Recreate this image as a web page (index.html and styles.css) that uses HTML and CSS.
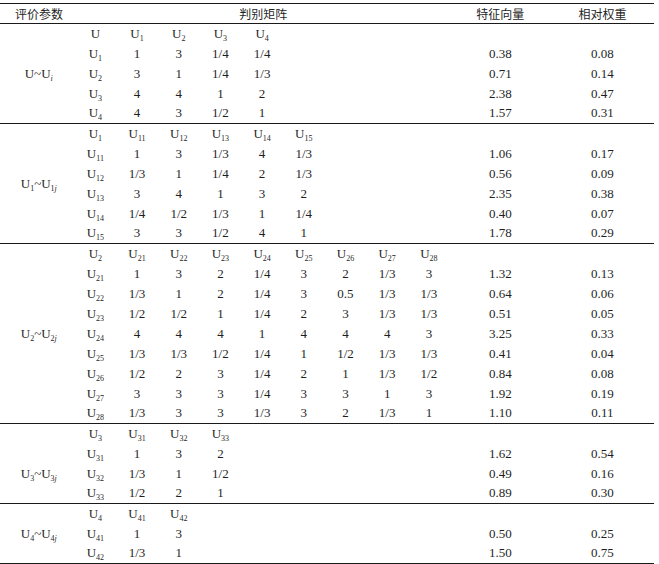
FILE: index.html
```html
<!DOCTYPE html>
<html lang="zh">
<head>
<meta charset="utf-8">
<title>判别矩阵</title>
<link rel="stylesheet" href="styles.css">
</head>
<body>
<table class="tbl">
<colgroup>
<col class="c-label">
<col class="c-m"><col class="c-m"><col class="c-m"><col class="c-m"><col class="c-m"><col class="c-m"><col class="c-m"><col class="c-m"><col class="c-m">
<col class="c-v1"><col class="c-v2">
</colgroup>
<thead>
<tr>
<th class="h-param">评价参数</th>
<th class="h-mat" colspan="9">判别矩阵</th>
<th class="h-val">特征向量</th>
<th class="h-val">相对权重</th>
</tr>
</thead>
<tbody>
<tr><td class="lbl" rowspan="5">U~U<sub class="it">i</sub></td><td>U</td><td>U<sub>1</sub></td><td>U<sub>2</sub></td><td>U<sub>3</sub></td><td>U<sub>4</sub></td><td></td><td></td><td></td><td></td><td></td><td></td></tr>
<tr><td>U<sub>1</sub></td><td>1</td><td>3</td><td>1/4</td><td>1/4</td><td></td><td></td><td></td><td></td><td>0.38</td><td>0.08</td></tr>
<tr><td>U<sub>2</sub></td><td>3</td><td>1</td><td>1/4</td><td>1/3</td><td></td><td></td><td></td><td></td><td>0.71</td><td>0.14</td></tr>
<tr><td>U<sub>3</sub></td><td>4</td><td>4</td><td>1</td><td>2</td><td></td><td></td><td></td><td></td><td>2.38</td><td>0.47</td></tr>
<tr><td>U<sub>4</sub></td><td>4</td><td>3</td><td>1/2</td><td>1</td><td></td><td></td><td></td><td></td><td>1.57</td><td>0.31</td></tr>
</tbody>
<tbody>
<tr><td class="lbl" rowspan="6">U<sub>1</sub>~U<sub>1<i>j</i></sub></td><td>U<sub>1</sub></td><td>U<sub>11</sub></td><td>U<sub>12</sub></td><td>U<sub>13</sub></td><td>U<sub>14</sub></td><td>U<sub>15</sub></td><td></td><td></td><td></td><td></td><td></td></tr>
<tr><td>U<sub>11</sub></td><td>1</td><td>3</td><td>1/3</td><td>4</td><td>1/3</td><td></td><td></td><td></td><td>1.06</td><td>0.17</td></tr>
<tr><td>U<sub>12</sub></td><td>1/3</td><td>1</td><td>1/4</td><td>2</td><td>1/3</td><td></td><td></td><td></td><td>0.56</td><td>0.09</td></tr>
<tr><td>U<sub>13</sub></td><td>3</td><td>4</td><td>1</td><td>3</td><td>2</td><td></td><td></td><td></td><td>2.35</td><td>0.38</td></tr>
<tr><td>U<sub>14</sub></td><td>1/4</td><td>1/2</td><td>1/3</td><td>1</td><td>1/4</td><td></td><td></td><td></td><td>0.40</td><td>0.07</td></tr>
<tr><td>U<sub>15</sub></td><td>3</td><td>3</td><td>1/2</td><td>4</td><td>1</td><td></td><td></td><td></td><td>1.78</td><td>0.29</td></tr>
</tbody>
<tbody>
<tr><td class="lbl" rowspan="9">U<sub>2</sub>~U<sub>2<i>j</i></sub></td><td>U<sub>2</sub></td><td>U<sub>21</sub></td><td>U<sub>22</sub></td><td>U<sub>23</sub></td><td>U<sub>24</sub></td><td>U<sub>25</sub></td><td>U<sub>26</sub></td><td>U<sub>27</sub></td><td>U<sub>28</sub></td><td></td><td></td></tr>
<tr><td>U<sub>21</sub></td><td>1</td><td>3</td><td>2</td><td>1/4</td><td>3</td><td>2</td><td>1/3</td><td>3</td><td>1.32</td><td>0.13</td></tr>
<tr><td>U<sub>22</sub></td><td>1/3</td><td>1</td><td>2</td><td>1/4</td><td>3</td><td>0.5</td><td>1/3</td><td>1/3</td><td>0.64</td><td>0.06</td></tr>
<tr><td>U<sub>23</sub></td><td>1/2</td><td>1/2</td><td>1</td><td>1/4</td><td>2</td><td>3</td><td>1/3</td><td>1/3</td><td>0.51</td><td>0.05</td></tr>
<tr><td>U<sub>24</sub></td><td>4</td><td>4</td><td>4</td><td>1</td><td>4</td><td>4</td><td>4</td><td>3</td><td>3.25</td><td>0.33</td></tr>
<tr><td>U<sub>25</sub></td><td>1/3</td><td>1/3</td><td>1/2</td><td>1/4</td><td>1</td><td>1/2</td><td>1/3</td><td>1/3</td><td>0.41</td><td>0.04</td></tr>
<tr><td>U<sub>26</sub></td><td>1/2</td><td>2</td><td>3</td><td>1/4</td><td>2</td><td>1</td><td>1/3</td><td>1/2</td><td>0.84</td><td>0.08</td></tr>
<tr><td>U<sub>27</sub></td><td>3</td><td>3</td><td>3</td><td>1/4</td><td>3</td><td>3</td><td>1</td><td>3</td><td>1.92</td><td>0.19</td></tr>
<tr><td>U<sub>28</sub></td><td>1/3</td><td>3</td><td>3</td><td>1/3</td><td>3</td><td>2</td><td>1/3</td><td>1</td><td>1.10</td><td>0.11</td></tr>
</tbody>
<tbody>
<tr><td class="lbl lbl-low" rowspan="4">U<sub>3</sub>~U<sub>3<i>j</i></sub></td><td>U<sub>3</sub></td><td>U<sub>31</sub></td><td>U<sub>32</sub></td><td>U<sub>33</sub></td><td></td><td></td><td></td><td></td><td></td><td></td><td></td></tr>
<tr><td>U<sub>31</sub></td><td>1</td><td>3</td><td>2</td><td></td><td></td><td></td><td></td><td></td><td>1.62</td><td>0.54</td></tr>
<tr><td>U<sub>32</sub></td><td>1/3</td><td>1</td><td>1/2</td><td></td><td></td><td></td><td></td><td></td><td>0.49</td><td>0.16</td></tr>
<tr><td>U<sub>33</sub></td><td>1/2</td><td>2</td><td>1</td><td></td><td></td><td></td><td></td><td></td><td>0.89</td><td>0.30</td></tr>
</tbody>
<tbody>
<tr><td class="lbl" rowspan="3">U<sub>4</sub>~U<sub>4<i>j</i></sub></td><td>U<sub>4</sub></td><td>U<sub>41</sub></td><td>U<sub>42</sub></td><td></td><td></td><td></td><td></td><td></td><td></td><td></td><td></td></tr>
<tr><td>U<sub>41</sub></td><td>1</td><td>3</td><td></td><td></td><td></td><td></td><td></td><td></td><td>0.50</td><td>0.25</td></tr>
<tr><td>U<sub>42</sub></td><td>1/3</td><td>1</td><td></td><td></td><td></td><td></td><td></td><td></td><td>1.50</td><td>0.75</td></tr>
</tbody>
</table>
</body>
</html>
```
FILE: styles.css
```css
html, body {
  margin: 0;
  padding: 0;
  background: #ffffff;
}

body {
  padding-top: 3px;
  font-family: "Liberation Serif", "Times New Roman", "Noto Sans CJK SC", serif;
  color: #1f1f1f;
}

.tbl {
  width: 654px;
  border-collapse: collapse;
  table-layout: fixed;
  font-size: 13px;
  line-height: 14px;
}

.c-label { width: 74.5px; }
.c-m { width: 41.7px; }
.c-v1 { width: 101px; }
.c-v2 { width: 103px; }

.tbl tr {
  height: 20px;
}

.tbl th,
.tbl td {
  padding: 0;
  text-align: center;
  vertical-align: middle;
  white-space: nowrap;
  font-weight: normal;
}

.tbl thead tr {
  border-top: 1px solid #1a1a1a;
  border-bottom: 1px solid #1a1a1a;
}

.tbl th {
  font-family: "Noto Sans CJK SC", sans-serif;
  font-size: 12px;
  height: 19px;
}

.tbl th.h-param {
  text-align: left;
  padding-left: 15px;
}

.tbl th.h-mat {
  padding-left: 2px;
}

.tbl tbody {
  border-bottom: 1px solid #1a1a1a;
}

.tbl td.lbl {
  padding-left: 3px;
}

.tbl td.lbl-low {
  padding-top: 20px;
}

.tbl sub {
  font-size: 8px;
  line-height: 0;
  vertical-align: -3px;
}

.tbl sub.it,
.tbl sub i {
  font-style: italic;
}
```
